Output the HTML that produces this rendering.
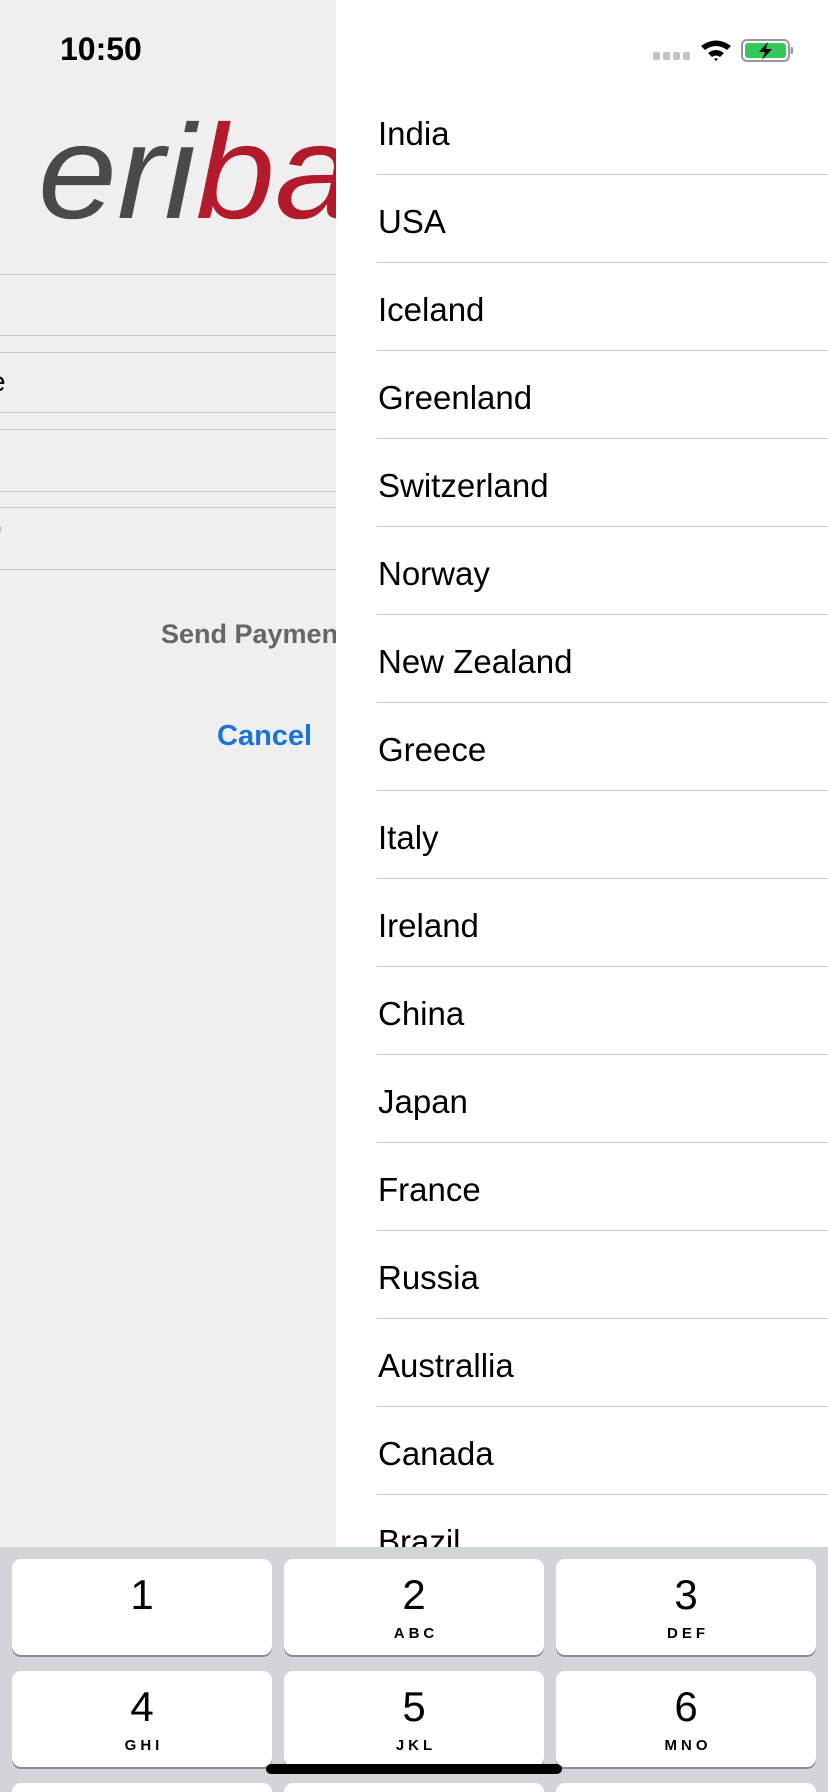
<!DOCTYPE html>
<html style="height:1792px;overflow:hidden"><head><meta charset="utf-8"><style>
*{margin:0;padding:0;box-sizing:border-box}
body{width:828px;height:1792px;overflow:hidden;position:relative;background:#efefef;font-family:"Liberation Sans",sans-serif}
.time{position:absolute;left:60px;top:31px;font-size:32px;font-weight:600;color:#000}
.logo{position:absolute;left:38px;top:106px;font-size:134px;font-style:italic;font-weight:normal;letter-spacing:0;white-space:nowrap;line-height:1;transform:scaleX(1.06);transform-origin:left top}
.logo .g{color:#4a4a4c}.logo .r{color:#b31b2c}
.hl{position:absolute;left:0;width:336px;height:1px;background:#c8c8c8}
.panel{position:absolute;left:336px;top:0;width:492px;height:1547px;background:#fff;overflow:hidden}
.row{position:absolute;left:41px;right:0;height:88px;border-bottom:1px solid #c8c8cc;font-size:33px;color:#000;line-height:94px;padding-left:1px}
.kb{position:absolute;left:0;top:1547px;width:828px;height:245px;background:#d1d4d9;overflow:hidden}
.key{position:absolute;width:260px;height:96px;background:#fff;border-radius:9px;box-shadow:0 2px 0 #8a8b8f;text-align:center}
.key .d{font-size:42px;line-height:1;margin-top:15px;color:#000}
.key .l{font-size:15px;font-weight:bold;letter-spacing:4px;margin-top:9px;padding-left:4px}
.home{position:absolute;left:266px;top:1764px;width:296px;height:10px;border-radius:5px;background:#000}
</style></head><body>
<div class="time">10:50</div>
<div class="logo"><span class="g">eri</span><span class="r">ba</span></div>
<div class="hl" style="top:274px"></div>
<div class="hl" style="top:335px"></div>
<div class="hl" style="top:352px"></div>
<div class="hl" style="top:412px"></div>
<div class="hl" style="top:429px"></div>
<div class="hl" style="top:491px"></div>
<div class="hl" style="top:507px"></div>
<div class="hl" style="top:569px"></div>
<div style="position:absolute;left:-10px;top:366px;font-size:28px;color:#000">e</div>
<div style="position:absolute;left:-6px;top:522px;font-size:28px;color:#bbb">/</div>
<div style="position:absolute;left:161px;top:619px;font-size:27px;font-weight:bold;color:#666;white-space:nowrap">Send Payment</div>
<div style="position:absolute;left:217px;top:720px;font-size:29px;font-weight:bold;color:#1a73e0">Cancel</div>
<div class="panel">
<svg style="position:absolute;left:317px;top:38px" width="140" height="24" viewBox="0 0 140 24">
<g fill="#c4c4c4"><rect x="0" y="14" width="7" height="8" rx="2"/><rect x="10" y="14" width="7" height="8" rx="2"/><rect x="20" y="14" width="7" height="8" rx="2"/><rect x="30" y="14" width="7" height="8" rx="2"/></g>
<path d="M48 8 Q63 -3 78 8 L74 12 Q63 4 52 12Z M55 15 Q63 9 71 15 L67 19 Q63 16 59 19Z M61 21 L63 23 L65 21 Q63 19.5 61 21Z" fill="#000"/>
<rect x="89" y="2" width="47" height="21" rx="5" fill="none" stroke="#999" stroke-width="2"/>
<rect x="92" y="5" width="41" height="15" rx="3" fill="#34c759"/>
<rect x="137.5" y="9" width="2.5" height="7" rx="1" fill="#999"/>
<path d="M115 4 L106 14 L112 14 L109 22 L119 11 L113 11 Z" fill="#000"/>
</svg>
<div class="row" style="top:87px">India</div>
<div class="row" style="top:175px">USA</div>
<div class="row" style="top:263px">Iceland</div>
<div class="row" style="top:351px">Greenland</div>
<div class="row" style="top:439px">Switzerland</div>
<div class="row" style="top:527px">Norway</div>
<div class="row" style="top:615px">New Zealand</div>
<div class="row" style="top:703px">Greece</div>
<div class="row" style="top:791px">Italy</div>
<div class="row" style="top:879px">Ireland</div>
<div class="row" style="top:967px">China</div>
<div class="row" style="top:1055px">Japan</div>
<div class="row" style="top:1143px">France</div>
<div class="row" style="top:1231px">Russia</div>
<div class="row" style="top:1319px">Australlia</div>
<div class="row" style="top:1407px">Canada</div>
<div class="row" style="top:1495px">Brazil</div>
</div>
<div class="kb">
<div class="key" style="left:12px;top:12px"><div class="d">1</div></div>
<div class="key" style="left:284px;top:12px"><div class="d">2</div><div class="l">ABC</div></div>
<div class="key" style="left:556px;top:12px"><div class="d">3</div><div class="l">DEF</div></div>
<div class="key" style="left:12px;top:124px"><div class="d">4</div><div class="l">GHI</div></div>
<div class="key" style="left:284px;top:124px"><div class="d">5</div><div class="l">JKL</div></div>
<div class="key" style="left:556px;top:124px"><div class="d">6</div><div class="l">MNO</div></div>
<div class="key" style="left:12px;top:236px"></div>
<div class="key" style="left:284px;top:236px"></div>
<div class="key" style="left:556px;top:236px"></div>
</div>
<div class="home"></div>
</body></html>
